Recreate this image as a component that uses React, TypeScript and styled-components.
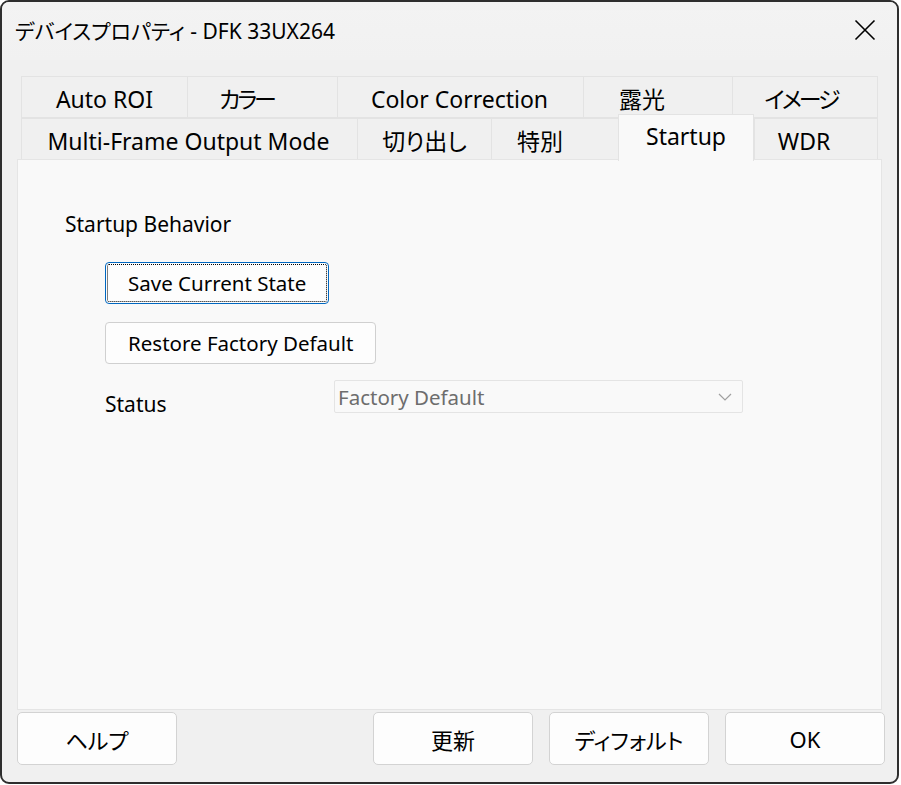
import React from "react";
import styled, { createGlobalStyle } from "styled-components";

const Global = createGlobalStyle`
  html, body { margin: 0; padding: 0; background: #ffffff; }
  body {
    font-family: "Noto Sans", "Noto Sans CJK JP", sans-serif;
    font-feature-settings: "palt";
  }
  * { box-sizing: border-box; }
`;

const Window = styled.div`
  width: 899px;
  height: 784px;
  border: 2px solid #2e2e2e;
  border-radius: 9px;
  background: #f0f0f0;
  display: flex;
  flex-direction: column;
  overflow: hidden;
  color: #000;
`;

const TitleBar = styled.div`
  height: 58px;
  flex: none;
  display: flex;
  align-items: center;
  justify-content: space-between;
  padding: 0 0 0 13px;
  background: linear-gradient(#f3f3f3, #f1f1f1);
`;

const Title = styled.div`
  font-size: 21px;
  line-height: 28px;
  margin-top: -1px;
`;

const CloseBtn = styled.div`
  width: 64px;
  height: 58px;
  display: flex;
  align-items: center;
  justify-content: center;
  margin-top: -3px;
`;

const Body = styled.div`
  flex: 1;
  display: flex;
  flex-direction: column;
  padding: 16px 12px 17px 15px;
`;

const TabStrip = styled.div`
  margin: 0 7px 0 4px;
  display: flex;
  flex-direction: column;
`;

const TabRow = styled.div`
  display: flex;
  height: 42px;
`;

const Tab = styled.div<{ $w: number; $active?: boolean; $kana?: boolean; $shift: number }>`
  width: ${(p) => p.$w}px;
  flex: none;
  display: flex;
  align-items: center;
  justify-content: center;
  font-size: 23px;
  line-height: 28px;
  letter-spacing: ${(p) => (p.$kana ? "-3px" : "0")};
  padding-right: ${(p) => p.$shift * 2}px;
  background: ${(p) => (p.$active ? "#f9f9f9" : "#f0f0f0")};
  border: 1px solid #e3e3e3;
  border-right: none;
  border-bottom: ${(p) => (p.$active ? "none" : "1px solid #e3e3e3")};
  &:last-child { border-right: 1px solid #e3e3e3; }
  ${(p) =>
    p.$active
      ? `
    height: 47px;
    margin-top: -4px;
    padding-bottom: 4px;
    border-right: 1px solid #e3e3e3;
    position: relative;
    z-index: 1;
  `
      : `padding-top: 4px;`}
`;

const Panel = styled.div`
  height: 551px;
  margin-top: -1px;
  margin-right: 3px;
  background: #f9f9f9;
  border: 1px solid #e5e5e5;
  padding: 50px 0 0 47px;
  display: flex;
  flex-direction: column;
`;

const GroupLabel = styled.div`
  font-size: 21px;
  line-height: 28px;
`;

const Group = styled.div`
  display: flex;
  flex-direction: column;
  align-items: flex-start;
  gap: 18px;
  padding-left: 40px;
  margin-top: 24px;
`;

const PushButton = styled.button<{ $focused?: boolean }>`
  height: 42px;
  padding: 0 22px;
  font-family: inherit;
  font-feature-settings: "palt";
  font-size: 20.5px;
  color: #000;
  background: #fdfdfd;
  border: 1px solid ${(p) => (p.$focused ? "#0067c0" : "#d0d0d0")};
  border-radius: 4px;
  position: relative;
  ${(p) =>
    p.$focused
      ? `
    &::after {
      content: "";
      position: absolute;
      inset: 1px;
      border: 1px dotted #000;
      border-radius: 2px;
    }
  `
      : ""}
`;

const StatusRow = styled.div`
  display: flex;
  align-items: center;
  width: 638px;
  margin-top: -7px;
`;

const StatusLabel = styled.div`
  font-size: 21px;
  line-height: 28px;
  width: 229px;
  padding-top: 15px;
`;

const Combo = styled.div`
  width: 409px;
  height: 33px;
  border: 1px solid #e4e4e4;
  border-radius: 2px;
  background: #f9f9f9;
  display: flex;
  align-items: center;
  justify-content: space-between;
  padding: 0 10px 0 3px;
  color: #6d6d6d;
  font-size: 20.5px;
`;

const Footer = styled.div`
  display: flex;
  gap: 16px;
  margin-top: 2px;
`;

const FooterButton = styled.button<{ $push?: boolean }>`
  width: 160px;
  height: 53px;
  flex: none;
  font-family: inherit;
  font-feature-settings: "palt";
  font-size: 22px;
  color: #000;
  background: #fdfdfd;
  border: 1px solid #d3d3d3;
  border-radius: 5px;
  margin-left: ${(p) => (p.$push ? "180px" : "0")};
`;

const tabsRow1 = [
  { label: "Auto ROI", w: 166, shift: 0 },
  { label: "カラー", w: 150, kana: true, shift: 16 },
  { label: "Color Correction", w: 246, shift: 1 },
  { label: "露光", w: 149, shift: 16 },
  { label: "イメージ", w: 146, kana: true, shift: 4 },
];
const tabsRow2 = [
  { label: "Multi-Frame Output Mode", w: 336, shift: 1 },
  { label: "切り出し", w: 134, shift: 0 },
  { label: "特別", w: 127, shift: 15 },
  { label: "Startup", w: 136, active: true, shift: 0 },
  { label: "WDR", w: 124, shift: 12 },
];

export default function App() {
  return (
    <>
      <Global />
      <Window>
        <TitleBar>
          <Title>デバイスプロパティ - DFK 33UX264</Title>
          <CloseBtn>
            <svg width="22" height="22" viewBox="0 0 22 22">
              <path d="M1.5 1.5 L20.5 20.5 M20.5 1.5 L1.5 20.5" stroke="#000" strokeWidth="1.6" />
            </svg>
          </CloseBtn>
        </TitleBar>
        <Body>
          <TabStrip>
            <TabRow>
              {tabsRow1.map((t) => (
                <Tab key={t.label} $w={t.w} $kana={t.kana} $shift={t.shift}>{t.label}</Tab>
              ))}
            </TabRow>
            <TabRow>
              {tabsRow2.map((t) => (
                <Tab key={t.label} $w={t.w} $active={t.active} $shift={t.shift}>{t.label}</Tab>
              ))}
            </TabRow>
          </TabStrip>
          <Panel>
            <GroupLabel>Startup Behavior</GroupLabel>
            <Group>
              <PushButton $focused>Save Current State</PushButton>
              <PushButton>Restore Factory Default</PushButton>
              <StatusRow>
                <StatusLabel>Status</StatusLabel>
                <Combo>
                  <span>Factory Default</span>
                  <svg width="14" height="8" viewBox="0 0 14 8">
                    <path d="M1 1 L7 7 L13 1" stroke="#a0a0a0" strokeWidth="1.2" fill="none" />
                  </svg>
                </Combo>
              </StatusRow>
            </Group>
          </Panel>
          <Footer>
            <FooterButton>ヘルプ</FooterButton>
            <FooterButton $push>更新</FooterButton>
            <FooterButton>ディフォルト</FooterButton>
            <FooterButton>OK</FooterButton>
          </Footer>
        </Body>
      </Window>
    </>
  );
}
